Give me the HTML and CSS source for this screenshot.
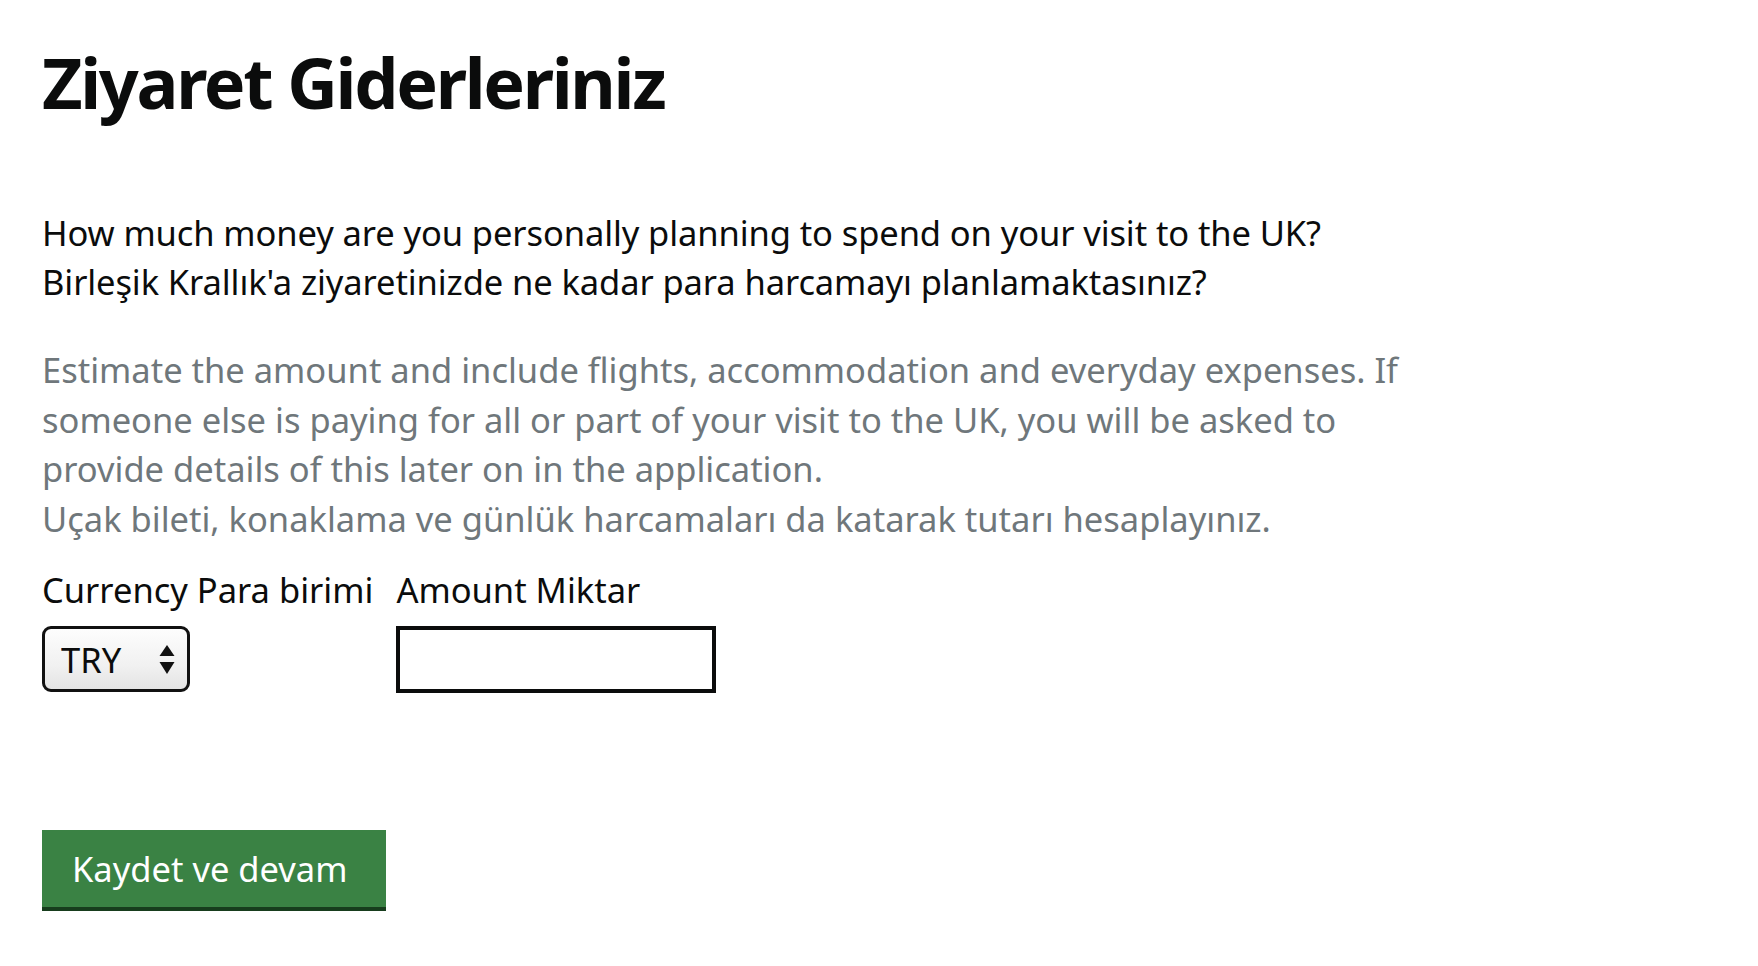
FILE: index.html
```html
<!DOCTYPE html>
<html lang="tr">
<head>
    <meta charset="UTF-8">
    <meta name="viewport" content="width=device-width, initial-scale=1.0">
    <title>Ziyaret Giderleriniz</title>
    <link rel="stylesheet" href="styles.css">
</head>
<body>
    <main class="page">
        <h1 class="heading">Ziyaret Giderleriniz</h1>

        <form class="cost-form">
            <p class="question">
                How much money are you personally planning to spend on your visit to the UK?<br>
                Birleşik Krallık'a ziyaretinizde ne kadar para harcamayı planlamaktasınız?
            </p>

            <p class="hint">
                Estimate the amount and include flights, accommodation and everyday expenses. If
                someone else is paying for all or part of your visit to the UK, you will be asked to
                provide details of this later on in the application.<br>
                Uçak bileti, konaklama ve günlük harcamaları da katarak tutarı hesaplayınız.
            </p>

            <div class="field-row">
                <div class="field">
                    <label class="field-label" for="currency">Currency Para birimi</label>
                    <div class="select-wrap">
                        <select id="currency" class="select">
                            <option>TRY</option>
                            <option>GBP</option>
                            <option>USD</option>
                            <option>EUR</option>
                        </select>
                        <!-- up/down arrows drawn over the select -->
                        <svg class="select-arrows" width="16" height="30" viewBox="0 0 16 30">
                            <path d="M8 0 L15.5 11 L0.5 11 Z" fill="#111"/>
                            <path d="M0.5 17 L15.5 17 L8 29 Z" fill="#111"/>
                        </svg>
                    </div>
                </div>
                <div class="field">
                    <label class="field-label" for="amount">Amount Miktar</label>
                    <input type="text" id="amount" class="input">
                </div>
            </div>

            <button type="button" class="button">Kaydet ve devam</button>
        </form>
    </main>
</body>
</html>
```

FILE: styles.css
```css
body {
    margin: 0;
    padding: 0;
    background-color: #fff;
    color: #0b0c0c;
    font-family: 'Noto Sans', 'Open Sans', sans-serif;
}

.page {
    padding: 43px 42px 0 42px;
}

.heading {
    margin: 0;
    font-size: 70px;
    font-weight: 700;
    line-height: 79px;
    letter-spacing: -2.3px;
}

.cost-form {
    max-width: 1385px;
}

.question {
    margin: 86px 0 0 0;
    font-size: 34.5px;
    line-height: 49px;
    letter-spacing: -0.1px;
}

.hint {
    margin: 39px 0 0 0;
    font-size: 34.5px;
    line-height: 49.6px;
    color: #6f777b;
}

/* Currency + amount */
.field-row {
    display: flex;
    gap: 23px;
    margin-top: 22px;
}

.field {
    display: flex;
    flex-direction: column;
    align-items: flex-start;
}

.field-label {
    font-size: 34.5px;
    line-height: 49px;
    margin-bottom: 12px;
}

.select-wrap {
    position: relative;
}

.select {
    -webkit-appearance: none;
    appearance: none;
    width: 148px;
    height: 66px;
    margin: 0;
    padding: 0 0 0 16px;
    border: 3px solid #111;
    border-radius: 9px;
    background: linear-gradient(#fdfdfd, #f1f1f1 60%, #e4e4e4);
    font-family: inherit;
    font-size: 34.5px;
    color: #0b0c0c;
}

.select-arrows {
    position: absolute;
    right: 15px;
    top: 19px;
    pointer-events: none;
}

.input {
    box-sizing: border-box;
    width: 320px;
    height: 67px;
    margin: 0;
    padding: 6px;
    border: 4px solid #0b0c0c;
    border-radius: 0;
    font-family: inherit;
    font-size: 34.5px;
}

.button {
    box-sizing: border-box;
    margin-top: 137px;
    width: 344px;
    height: 81px;
    padding: 0 30px;
    border: 0;
    border-bottom: 4px solid #173d1d;
    border-radius: 0;
    background-color: #3a8244;
    color: #fff;
    font-family: inherit;
    font-size: 34.5px;
    text-align: left;
    cursor: pointer;
}
```
